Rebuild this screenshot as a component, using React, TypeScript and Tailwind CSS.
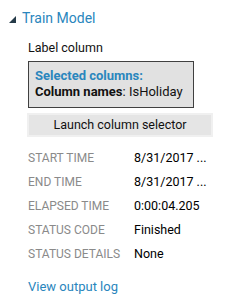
const rows: [string, string][] = [
  ["START TIME", "8/31/2017 ..."],
  ["END TIME", "8/31/2017 ..."],
  ["ELAPSED TIME", "0:00:04.205"],
  ["STATUS CODE", "Finished"],
  ["STATUS DETAILS", "None"],
];

export default function App() {
  return (
    <div className="h-[308px] w-[247px] bg-white font-['Roboto',sans-serif] text-[12.5px] text-[#111]">
      <div className="flex items-center gap-[6px] pl-[9px] pt-[9px]">
        <svg width="7" height="7" viewBox="0 0 7 7" className="mt-[3px]">
          <polygon points="7,0 7,7 0,7" fill="#253a48" />
        </svg>
        <span className="text-[14px] leading-[18px] text-[#2a86bd]">Train Model</span>
      </div>

      <div className="pl-[28px]">
        <div className="mt-[13px] leading-[16px]">Label column</div>

        <div className="mt-[5px] w-[166px] border border-[#404040] bg-[#e1e1e1] px-[6px] pb-[7px] pt-[6px] text-[13px] leading-[16px]">
          <div className="font-bold text-[#2a86bd]">Selected columns:</div>
          <div className="whitespace-nowrap">
            <span className="font-bold">Column names</span>: IsHoliday
          </div>
        </div>

        <button className="mt-[5px] -ml-[1px] h-[24px] w-[186px] border-2 border-[#f0f0f0] bg-[#e5e5e5] text-center leading-[18px]">
          Launch column selector
        </button>

        <div className="mt-[12px] flex flex-col gap-[6px]">
          {rows.map(([k, v]) => (
            <div key={k} className="flex h-[18px] items-center whitespace-nowrap leading-[18px]">
              <span className="w-[106px] text-[12px] text-[#8a8a8a]">{k}</span>
              <span className="text-black">{v}</span>
            </div>
          ))}
        </div>

        <div className="mt-[15px] text-[13px] leading-[18px] text-[#2a86bd]">View output log</div>
      </div>
    </div>
  );
}
